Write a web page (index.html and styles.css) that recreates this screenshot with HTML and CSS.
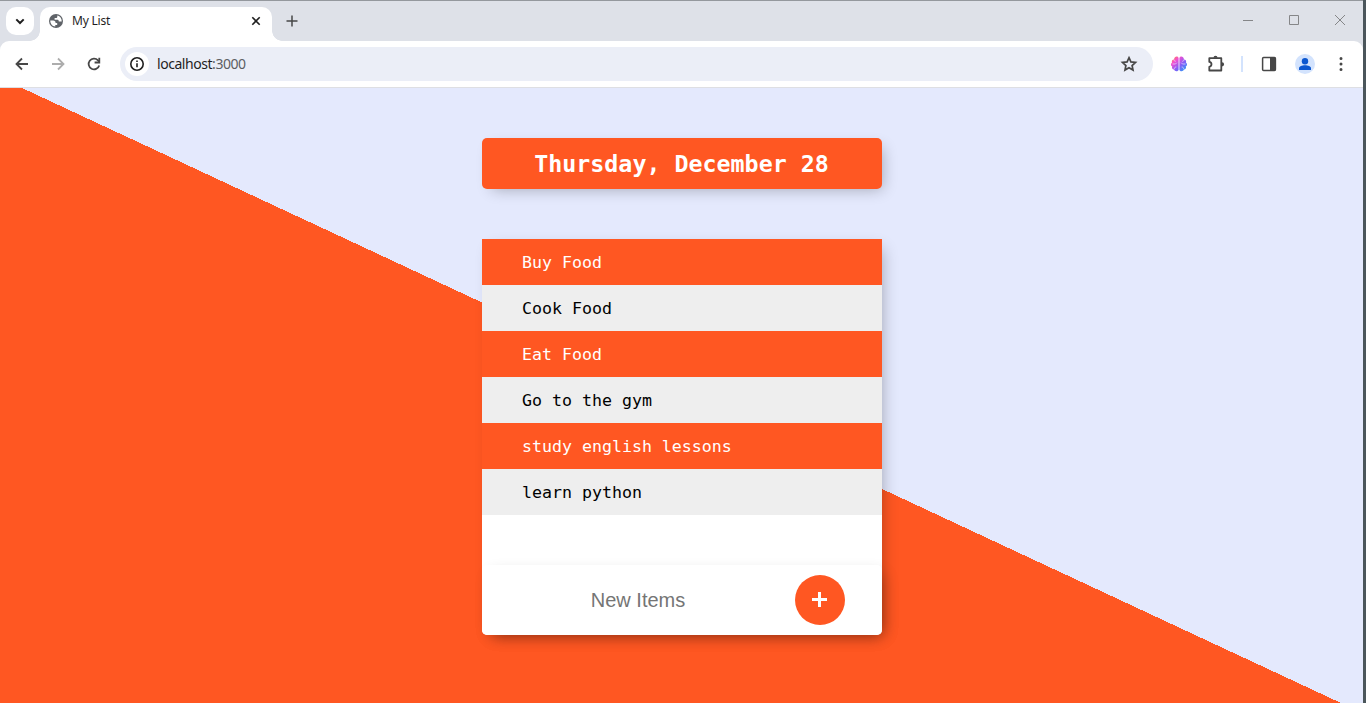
FILE: index.html
```html
<!DOCTYPE html>
<html lang="en">
<head>
<meta charset="utf-8">
<title>My List</title>
<link rel="stylesheet" href="styles.css">
</head>
<body>
<div class="window">
  <header class="tabstrip">
    <button class="tab-search" aria-label="Search tabs"><svg width="28" height="28" viewBox="0 0 28 28"><path d="M10.3 12.4l3.7 3.6 3.7-3.6" fill="none" stroke="#1f1f1f" stroke-width="2"/></svg></button>
    <div class="tab">
      <svg class="globe" width="14" height="14" viewBox="0 0 14 14"><circle cx="7" cy="7" r="7" fill="#5f6368"/><path d="M1.3 6.6h2.9c1.5 0 2.4.9 2.4 2.3h1.6v2.2H6.3v1.5C3.4 12.4 1.2 9.900 1.300 6.600zM8.300 1.500v1.200c0 .8-.6 1.300-1.400 1.300H5.600v1.700h2.700c1 0 1.500.7 1.500 1.700h2.900C12.900 4.500 11 2 8.300 1.500z" fill="#fff"/></svg>
      <span class="tab-title">My List</span>
      <svg class="tab-close" width="10" height="10" viewBox="0 0 10 10"><path d="M1.300 1.300l7.400 7.400M8.700 1.300L1.300 8.700" stroke="#1f1f1f" stroke-width="1.600"/></svg>
    </div>
    <svg class="new-tab" width="12" height="12" viewBox="0 0 12 12"><path d="M6 .5v11M.5 6h11" stroke="#474747" stroke-width="1.500"/></svg>
    <div class="controls">
      <svg width="12" height="12" viewBox="0 0 12 12"><path d="M1 6.500h10" stroke="#858688"/></svg>
      <svg width="12" height="12" viewBox="0 0 12 12"><path d="M1.500 1.500h9v9h-9z" fill="none" stroke="#858688"/></svg>
      <svg width="12" height="12" viewBox="0 0 12 12"><path d="M1 1l10 10M11 1L1 11" stroke="#858688"/></svg>
    </div>
  </header>
  <nav class="toolbar">
    <svg class="nav-icon" width="16" height="16" viewBox="0 0 16 16"><path d="M14 8H3M8 2.500L2.500 8 8 13.500" fill="none" stroke="#474747" stroke-width="1.800"/></svg>
    <svg class="nav-icon" width="16" height="16" viewBox="0 0 16 16"><path d="M2 8h11M8 2.500L13.500 8 8 13.500" fill="none" stroke="#adadad" stroke-width="1.800"/></svg>
    <svg class="nav-icon" width="16" height="16" viewBox="0 0 16 16"><path d="M13.200 9.500A5.400 5.400 0 1 1 12 4.300L13.300 6" fill="none" stroke="#474747" stroke-width="1.800"/><path d="M13.300 1.800v4.700H8.600" fill="none" stroke="#474747" stroke-width="1.800"/></svg>
    <div class="address">
      <span class="info"><svg width="16" height="16" viewBox="0 0 16 16"><circle cx="8" cy="8" r="6.200" fill="none" stroke="#1f1f1f" stroke-width="1.600"/><path d="M8 7.200v4M8 4.500v1.600" stroke="#1f1f1f" stroke-width="1.600"/></svg></span>
      <span class="url">localhost<span class="port">:3000</span></span>
      <svg class="star" width="18" height="18" viewBox="0 0 18 18"><path d="M9 2.700l1.900 4.200 4.600.5-3.400 3.100.9 4.500-4-2.300L5 15l.9-4.500-3.400-3.100 4.600-.5z" fill="none" stroke="#474747" stroke-width="1.700"/></svg>
    </div>
    <div class="actions">
      <svg width="18" height="18" viewBox="0 0 18 18"><defs><linearGradient id="brain" x1="0" y1="0" x2="1" y2="1"><stop offset="0" stop-color="#ff922b"/><stop offset=".28" stop-color="#f54fd0"/><stop offset=".6" stop-color="#845ef7"/><stop offset="1" stop-color="#15aaf5"/></linearGradient></defs><path d="M8.600 3v12c-1.100 2.100-4.100 1.500-4.400-.4-1.800.1-2.700-1.600-2-3-1.600-.8-1.600-3.300-.2-4.200C1.400 5.800 2.500 4.500 4 4.500 4.300 1.500 7.500.5 8.600 3zM9.400 3v12c1.100 2.100 4.100 1.500 4.400-.4 1.800.1 2.700-1.600 2-3 1.600-.8 1.600-3.300.2-4.200.6-1.600-.5-2.900-2-2.900C13.700 1.500 10.500.5 9.400 3z" fill="url(#brain)"/><path d="M4 4.500c0 1.200.7 1.800 1.800 1.800M2.500 9h3l1.300-1.300M4.300 14c0-1.300.8-2 2-2M14 4.500c0 1.200-.7 1.800-1.800 1.800M15.500 9h-3l-1.300-1.300M13.700 14c0-1.300-.8-2-2-2" fill="none" stroke="#e8ddff" stroke-width=".7"/></svg>
      <svg class="puzzle" width="18" height="18" viewBox="0 0 18 18"><path d="M2.300 3.200h12v12.300h-12v-3.700c2.900-.4 2.900-4.500 0-4.900z" fill="none" stroke="#474747" stroke-width="1.800" stroke-linejoin="round"/><path d="M6.500 2.800a2 2 0 0 1 4 0zM15 7.200a2.100 2.100 0 0 1 0 4.200z" fill="#474747"/></svg>
      <i class="divider"></i>
      <svg class="panel" width="16" height="16" viewBox="0 0 16 16"><rect x="1.600" y="1.600" width="12.800" height="12.800" rx="1" fill="none" stroke="#474747" stroke-width="1.500"/><path d="M9 1.500h5.500v13H9z" fill="#474747"/></svg>
      <span class="avatar"><svg width="20" height="20" viewBox="0 0 20 20"><circle cx="10" cy="7.200" r="3.200" fill="#0b57d0"/><path d="M4 16v-1.800c0-4 12-4 12 0V16z" fill="#0b57d0"/></svg></span>
      <svg class="more" width="4" height="16" viewBox="0 0 4 16"><path d="M2 1a1.500 1.500 0 1 1 0 3 1.500 1.500 0 0 1 0-3zM2 6.500a1.500 1.500 0 1 1 0 3 1.500 1.500 0 0 1 0-3zM2 12a1.500 1.500 0 1 1 0 3 1.500 1.500 0 0 1 0-3z" fill="#474747"/></svg>
    </div>
  </nav>
  <main class="page">
    <h1 class="box heading">Thursday, December 28</h1>
    <section class="box list">
      <p class="item">Buy Food</p>
      <p class="item">Cook Food</p>
      <p class="item">Eat Food</p>
      <p class="item">Go to the gym</p>
      <p class="item">study english lessons</p>
      <p class="item">learn python</p>
      <form class="box new-item">
        <input type="text" placeholder="New Items" aria-label="New item">
        <button type="button" aria-label="Add"><svg width="16" height="16" viewBox="0 0 16 16"><path d="M7.500 0v15M0 7.500h15" stroke="#fff" stroke-width="3"/></svg></button>
      </form>
    </section>
  </main>
</div>
</body>
</html>
```
FILE: styles.css
```css
* { box-sizing: border-box; }
body { margin: 0; background: #4b565b; overflow: hidden; font-family: "Noto Sans", sans-serif; }
svg { display: block; flex: none; }
button { border: 0; padding: 0; }

.window { width: 1363px; height: 703px; display: flex; flex-direction: column; background: #dee1e8; }

.tabstrip { height: 41px; flex: none; display: flex; align-items: flex-start; border-top: 1px solid #94989d; padding: 6px 17px 0 6px; }
.tab-search { width: 28px; height: 28px; border-radius: 10px; background: #fff; }
.tab { position: relative; width: 232px; height: 34px; margin-left: 6px; padding: 0 11px 6px 9px; display: flex; align-items: center; background: #fff; border-radius: 10px 10px 0 0; }
.tab::before, .tab::after { content: ""; position: absolute; bottom: 0; width: 10px; height: 10px; }
.tab::before { left: -10px; background: radial-gradient(circle at 0 0, transparent 9.500px, #fff 10px); }
.tab::after { right: -10px; background: radial-gradient(circle at 100% 0, transparent 9.500px, #fff 10px); }
.tab-title { margin-left: 9px; font-size: 12px; line-height: 16px; color: #1f1f1f; letter-spacing: -0.2px; }
.tab-close { margin-left: auto; }
.new-tab { margin: 8px 0 0 14px; }
.controls { display: flex; gap: 34px; margin: 7px 0 0 auto; }

.toolbar { height: 47px; flex: none; display: flex; align-items: center; background: #fff; border-radius: 9px 9px 0 0; border-bottom: 1px solid #dedfe3; padding-left: 14px; }
.nav-icon { margin-right: 20px; }
.nav-icon + .nav-icon + .nav-icon { margin-right: 18px; }
.address { width: 1033px; height: 34px; padding: 0 15px 0 5px; border-radius: 17px; display: flex; align-items: center; background: #ebeef7; }
.info { width: 24px; height: 24px; border-radius: 50%; background: #fff; display: grid; place-items: center; }
.url { margin-left: 8px; font-size: 14px; line-height: 20px; color: #1f1f1f; letter-spacing: -0.45px; }
.port { color: #5c5e63; }
.star { margin-left: auto; }
.actions { display: flex; align-items: center; margin-left: 17px; }
.puzzle { margin-left: 19px; }
.divider { width: 2px; height: 16px; margin-left: 16px; background: #d3e3fd; }
.panel { margin-left: 18px; }
.avatar { width: 20px; height: 20px; border-radius: 50%; background: #d3e3fd; margin-left: 18px; }
.more { margin-left: 24px; }

.page { flex: 1; padding-top: 50px; background: linear-gradient(-155deg, #e4e9fd 50%, #ff5722 50%); }
.box { width: 400px; margin: 0 auto; background: #fff; border-radius: 5px; box-shadow: 5px 5px 15px -5px rgba(0, 0, 0, 0.3); }
.heading { height: 51px; margin-bottom: 50px; background: #ff5722; color: #fff; text-align: center; font: bold 23.300px/52px "DejaVu Sans Mono", monospace; }
.list { border-radius: 0 0 5px 5px; }
.item { height: 46px; margin: 0; padding-left: 40.500px; background: #eee; color: #000; font: 16.600px/48px "DejaVu Sans Mono", monospace; }
.item:nth-child(odd) { background: #ff5722; color: #fff; }
.new-item { height: 70px; margin-top: 50px; display: flex; align-items: center; }
.new-item input { width: 313px; height: 60px; padding: 0; border: 0; background: transparent; text-align: center; font: 20px "Liberation Sans", sans-serif; color: #000; }
.new-item input::placeholder { color: #757575; opacity: 1; }
.new-item button { width: 50px; height: 50px; border-radius: 50%; background: #ff5722; display: grid; place-items: center; }
```
